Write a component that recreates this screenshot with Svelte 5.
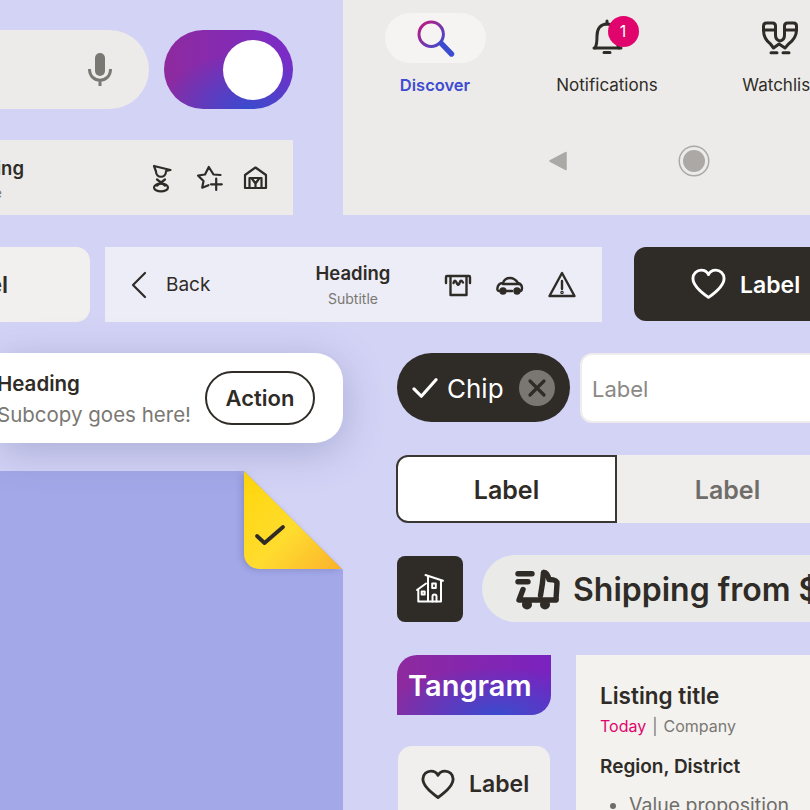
<script>
  const tabs = [
    { label: 'Discover', active: true },
    { label: 'Notifications', badge: 1 },
    { label: 'Watchlist' }
  ];
</script>

{#snippet heart(size)}
  <svg class="heart" width={size} height={size * 0.9} viewBox="0 0 36 32" fill="none" stroke="currentColor" stroke-width="3" stroke-linejoin="round">
    <path d="M18 30C8 23 2 17 2 10.500 2 5.500 6 2 10.500 2 13.500 2 16.500 3.500 18 6.500 19.500 3.500 22.500 2 25.500 2 30 2 34 5.500 34 10.500 34 17 28 23 18 30Z" />
  </svg>
{/snippet}

<div class="canvas">
  <div class="top">
    <div class="top-left">
      <div class="search-row">
        <div class="search">
          <svg width="28" height="38" viewBox="87 50 28 38" fill="none" stroke="#7a7873">
            <rect x="96" y="52" width="10" height="23" rx="5" fill="#7a7873" stroke="none" />
            <path d="M90.500 68c0 15 21 15 21 0M101 78v7" stroke-width="3" />
          </svg>
        </div>
        <div class="toggle"><span class="knob"></span></div>
      </div>

      <div class="strip">
        <div class="strip-title">
          <span class="heading">Heading</span>
          <span class="subtitle">Subtitle</span>
        </div>
        <div class="strip-icons">
          <svg width="34" height="34" viewBox="145 161 34 34" fill="none" stroke="#2f2b26" stroke-width="2.200" stroke-linecap="round" stroke-linejoin="round">
            <path d="M154 166l16.500 4-4.500 1M154 166l2 5.500M156 171.500c0 7 10 7 10 0" />
            <path d="M157 179.500l8 6M165 179.500l-8 6" />
            <ellipse cx="161" cy="187.500" rx="7" ry="3.800" />
          </svg>
          <svg width="34" height="34" viewBox="191.500 161 34 34" fill="none" stroke="#2f2b26" stroke-width="2.200" stroke-linecap="round" stroke-linejoin="round">
            <path d="M220 175l-7-.5-4.700-7.500-3.800 7.500-7 1 5.500 5.500-1.300 6.700 6.300-2.500" />
            <path d="M215.700 178.500v11.500M210.500 184.300h10.800" />
          </svg>
          <svg width="34" height="34" viewBox="238 161 34 34" fill="none" stroke="#2f2b26" stroke-width="2.200" stroke-linejoin="round">
            <path d="M245 188v-13l10.500-7.500 10.500 7.500v13z" />
            <path d="M249.500 188v-10h12v10M251.500 178l4 5.500 4-5.500M255.500 183v5" />
          </svg>
        </div>
      </div>
    </div>

    <div class="nav-panel">
      <div class="tabs">
        {#each tabs as tab, i}
          <div class="tab">
            <div class="tab-icon" class:active={tab.active}>
              {#if i === 0}
                <svg width="40" height="46" viewBox="415.500 15 40 46" fill="none" stroke-linecap="round">
                  <defs>
                    <linearGradient id="lens" x1="0" y1="0" x2="1" y2="1">
                      <stop offset="0" stop-color="#c4187e" />
                      <stop offset="1" stop-color="#3c4ccf" />
                    </linearGradient>
                  </defs>
                  <circle cx="431.700" cy="34.300" r="12.200" stroke="url(#lens)" stroke-width="3" />
                  <path d="M442 43.700l10 10.300" stroke="#3c4ccf" stroke-width="5.400" />
                </svg>
              {:else if i === 1}
                <svg width="40" height="46" viewBox="587 15 40 46" fill="none" stroke="#2f2b26" stroke-width="3" stroke-linecap="round">
                  <path d="M595 48c2-3 2-6 2-12 0-8 4-12 10-12s10 4 10 12c0 6 0 9 2 12" />
                  <path d="M594 48h27M604 52.500h6M607 24v-3" />
                </svg>
              {:else}
                <svg width="40" height="46" viewBox="759 15 40 46" fill="none" stroke="#2f2b26" stroke-width="3" stroke-linecap="round" stroke-linejoin="round">
                  <path d="M763.500 30v-4q0-3 3-3h6q3 0 3 3v4zM784.500 30v-4q0-3 3-3h6q3 0 3 3v4z" />
                  <path d="M763.500 30c0 7 3 11 7 14l3 4 5.500-4 6 4 3.500-4c4-3 8-7 8-14" />
                  <path d="M775.500 30v5c0 3.500 2 5.500 4.500 6 2.500-.5 4.500-2.500 4.500-6v-5" />
                  <path d="M771 52.700h6M783 52.700h6" />
                </svg>
              {/if}
              {#if tab.badge}<span class="badge">{tab.badge}</span>{/if}
            </div>
            <span class="tab-label" class:active={tab.active}>{tab.label}</span>
          </div>
        {/each}
      </div>
      <div class="android-nav">
        <svg width="18" height="20" viewBox="0 0 18 20"><path d="M17 1.500v17L1 10z" fill="#aba8a5" stroke="#aba8a5" stroke-width="1.500" stroke-linejoin="round" /></svg>
        <span class="home"></span>
      </div>
    </div>
  </div>

  <div class="mid">
    <div class="label-stub"><span>Label</span></div>
    <div class="navbar">
      <div class="back">
        <svg width="18" height="28" viewBox="0 0 18 28" fill="none" stroke="#2f2b26" stroke-width="2.200" stroke-linecap="round" stroke-linejoin="round"><path d="M15 2L3 14l12 12" /></svg>
        <span>Back</span>
      </div>
      <div class="title">
        <span class="heading">Heading</span>
        <span class="subtitle">Subtitle</span>
      </div>
      <div class="bar-icons">
        <svg width="34" height="34" viewBox="441 268 34 34" fill="none" stroke="#2f2b26" stroke-width="2.400" stroke-linecap="round" stroke-linejoin="round">
          <path d="M446 283v-6q0-1 1-1h22q1 0 1 1v6M450.500 276v19h16v-19" />
          <path d="M453.500 283c1-3 2-3 3-.5s2 3.500 3 .5 2-3 3.500-.5" />
        </svg>
        <svg width="34" height="34" viewBox="493 268 34 34" fill="none" stroke="#2f2b26" stroke-width="2.400" stroke-linecap="round" stroke-linejoin="round">
          <path d="M499 291c-2 0-2-2-1-5 1-2 3-3 5-3 1-3 3-5 7-5s6 2 8 5c3 1 4 3 4 5 0 2-1 3-2 3M507 291h5" />
          <path d="M503 284h17" />
          <circle cx="503" cy="291" r="2.500" fill="#2f2b26" />
          <circle cx="517" cy="291" r="2.500" fill="#2f2b26" />
        </svg>
        <svg width="34" height="34" viewBox="544 268 34 34" fill="none" stroke="#2f2b26" stroke-width="2.400" stroke-linecap="round" stroke-linejoin="round">
          <path d="M561 273l12.500 23h-25zM561 281v8" />
          <circle cx="561" cy="292.500" r=".6" />
        </svg>
      </div>
    </div>
    <button class="dark-button">
      {@render heart(35)}
      <span>Label</span>
    </button>
  </div>

  <div class="bottom">
    <div class="left-col">
      <div class="toast">
        <div class="copy">
          <span class="toast-heading">Heading</span>
          <span class="toast-sub">Subcopy goes here!</span>
        </div>
        <button class="action">Action</button>
      </div>
      <div class="sheet-wrap">
        <div class="sheet"></div>
        <svg class="fold" width="100" height="100" viewBox="0 0 100 100">
          <defs>
            <linearGradient id="foldfill" x1="0" y1="0" x2="1" y2="1">
              <stop offset="0" stop-color="#ffd60a" />
              <stop offset=".55" stop-color="#ffdc2e" />
              <stop offset="1" stop-color="#fbb12c" />
            </linearGradient>
          </defs>
          <path d="M1 0L99 98H16A15 15 0 0 1 1 83z" fill="url(#foldfill)" />
          <path d="M14 65l7.500 7L40 56" fill="none" stroke="#2f2b26" stroke-width="3.800" stroke-linecap="round" stroke-linejoin="round" />
        </svg>
      </div>
    </div>

    <div class="right-col">
      <div class="row chip-row">
        <div class="chip">
          <svg width="26" height="22" viewBox="0 0 28 24" fill="none" stroke="#fff" stroke-width="3.400" stroke-linecap="round" stroke-linejoin="round"><path d="M2 13l8 8L26 3" /></svg>
          <span class="chip-text">Chip</span>
          <span class="chip-x">
            <svg width="20" height="20" viewBox="0 0 20 20" stroke="#2f2b26" stroke-width="3.200" stroke-linecap="round"><path d="M3 3l14 14M17 3L3 17" /></svg>
          </span>
        </div>
        <div class="input">Label</div>
      </div>

      <div class="row segmented">
        <div class="seg on">Label</div>
        <div class="seg">Label</div>
      </div>

      <div class="row shipping-row">
        <div class="square">
          <svg width="30" height="32" viewBox="415 573 30 32" fill="none" stroke="#fff" stroke-width="2" stroke-linecap="round" stroke-linejoin="round">
            <path d="M417 590l9-6.500M418.300 589v12.500h22.700V581M425.500 575l17.500 5.700M428 576v25.500" />
            <rect x="421.700" y="591.500" width="3" height="3" />
            <rect x="432.200" y="583.500" width="3.600" height="4.600" />
            <path d="M432.500 601.500v-5q0-2 2-2t2 2v5" />
          </svg>
        </div>
        <div class="shipping">
          <svg width="48" height="42" viewBox="514 567 48 42" fill="none" stroke="#2f2b26" stroke-width="5.400" stroke-linecap="round" stroke-linejoin="round">
            <path d="M518 572.700h14M518 580.700h10M523 588.500l-4 10.500h37" />
            <path d="M543.500 571.500c-.5 8-1.500 15-3 23M544 571.500c3 0 4 3 5 7 4 0 8 1 8 4l-1 16" />
            <circle cx="527" cy="603.500" r="5" fill="#2f2b26" stroke="none" />
            <circle cx="545" cy="603.500" r="5" fill="#2f2b26" stroke="none" />
          </svg>
          <span class="shipping-text">Shipping from $</span>
        </div>
      </div>

      <div class="row last-row">
        <div class="stack">
          <div class="tangram">Tangram</div>
          <div class="label-card">
            {@render heart(34)}
            <span>Label</span>
          </div>
        </div>
        <div class="listing">
          <div class="listing-title">Listing title</div>
          <div class="listing-meta"><span class="today">Today</span><span class="sep">|</span><span>Company</span></div>
          <div class="listing-region">Region, District</div>
          <ul>
            <li>Value proposition</li>
          </ul>
        </div>
      </div>
    </div>
  </div>
</div>

<style>
  :global(body) {
    margin: 0;
    background: #d2d3f5;
  }

  .canvas {
    width: 810px;
    height: 810px;
    overflow: hidden;
    background: #d2d3f5;
    color: #2f2b26;
    font-family: Inter, "Noto Sans", sans-serif;
    display: flex;
    flex-direction: column;
  }

  svg {
    display: block;
    flex: none;
  }

  /* top row */
  .top {
    display: flex;
    height: 215px;
    flex: none;
  }

  .top-left {
    width: 293px;
    flex: none;
    padding-top: 30px;
    box-sizing: border-box;
    display: flex;
    flex-direction: column;
    gap: 31px;
  }

  .search-row {
    display: flex;
    gap: 15px;
    height: 79px;
  }

  .search {
    width: 149px;
    background: #ecebea;
    border-radius: 0 40px 40px 0;
    display: flex;
    align-items: center;
    justify-content: flex-end;
    padding-right: 35px;
    box-sizing: border-box;
  }

  .toggle {
    width: 129px;
    border-radius: 40px;
    background:
      radial-gradient(ellipse 70% 72% at 66% 100%, #3a4bce 0%, rgba(58, 75, 206, 0) 100%),
      linear-gradient(90deg, #8e2a9e, #7a2cc8);
    display: flex;
    align-items: center;
    justify-content: flex-end;
    padding-right: 10px;
    box-sizing: border-box;
  }

  .knob {
    width: 60px;
    height: 60px;
    border-radius: 50%;
    background: #fff;
  }

  .strip {
    height: 75px;
    background: #ecebea;
    display: flex;
    align-items: center;
    padding-right: 21px;
  }

  .strip-title {
    width: 24px;
    display: flex;
    flex-direction: column;
    align-items: flex-end;
    white-space: nowrap;
    gap: 3px;
    margin-top: 3px;
  }

  .strip-title .subtitle {
    margin-right: 22px;
  }

  .strip-icons {
    margin-left: auto;
    display: flex;
    gap: 12.5px;
  }

  .heading {
    font-size: 18.5px;
    line-height: 24px;
    font-weight: 600;
  }

  .subtitle {
    font-size: 14px;
    line-height: 20px;
    color: #7a7873;
  }

  .nav-panel {
    margin-left: 50px;
    flex: 1;
    min-width: 0;
    background: #ecebea;
    padding: 13px 0 0 6px;
    display: flex;
    flex-direction: column;
  }

  .tabs {
    display: flex;
  }

  .tab {
    width: 172px;
    flex: none;
    display: flex;
    flex-direction: column;
    align-items: center;
  }

  .tab-icon {
    position: relative;
    width: 101px;
    height: 50px;
    border-radius: 25px;
    display: flex;
    align-items: center;
    justify-content: center;
  }

  .tab-icon.active {
    background: #f5f4f2;
  }

  .badge {
    position: absolute;
    left: 51px;
    top: 3px;
    width: 31px;
    height: 31px;
    border-radius: 50%;
    background: #e0046c;
    color: #fff;
    font-size: 16px;
    line-height: 31px;
    text-align: center;
  }

  .tab-label {
    margin-top: 10px;
    font-size: 17px;
    line-height: 24px;
    white-space: nowrap;
  }

  .tab-label.active {
    color: #3f4bd0;
    font-size: 16.5px;
    font-weight: 600;
  }

  .android-nav {
    margin: 53px 0 0 200px;
    display: flex;
    align-items: center;
    gap: 111px;
  }

  .home {
    width: 22px;
    height: 22px;
    border-radius: 50%;
    background: #aba8a5;
    box-shadow: 0 0 0 3px #ecebea, 0 0 0 4.5px #aba8a5;
    margin-left: 5px;
  }

  /* middle row */
  .mid {
    margin-top: 32px;
    display: flex;
    flex: none;
    height: 75px;
  }

  .label-stub {
    width: 90px;
    flex: none;
    background: #f1f0ee;
    border-radius: 0 14px 14px 0;
    display: flex;
    align-items: center;
    justify-content: flex-end;
    padding-right: 82px;
    box-sizing: border-box;
    font-size: 23px;
    font-weight: 600;
  }

  .navbar {
    margin-left: 15px;
    width: 497px;
    flex: none;
    background: #ecedf7;
    display: grid;
    grid-template-columns: 180px 136px 181px;
    align-items: center;
  }

  .back {
    display: flex;
    align-items: center;
    gap: 18px;
    padding-left: 25px;
    font-size: 19px;
  }

  .title {
    display: flex;
    flex-direction: column;
    align-items: center;
    gap: 4px;
  }

  .bar-icons {
    display: flex;
    gap: 18px;
    padding-left: 20px;
  }

  .dark-button {
    margin-left: 32px;
    width: 260px;
    height: 74px;
    flex: none;
    border: 0;
    border-radius: 12px;
    background: #2f2b26;
    color: #fff;
    font: 600 23px Inter, sans-serif;
    display: flex;
    align-items: center;
    gap: 14px;
    padding: 0 0 0 57px;
  }

  .dark-button span {
    padding-top: 2px;
  }

  /* lower columns */
  .bottom {
    margin-top: 31px;
    display: flex;
    flex: 1;
    min-height: 0;
  }

  .left-col {
    width: 343px;
    flex: none;
    display: flex;
    flex-direction: column;
  }

  .toast {
    height: 90px;
    flex: none;
    background: #fff;
    border-radius: 0 28px 28px 0;
    box-shadow: 0 8px 40px rgba(70, 70, 130, 0.28);
    display: flex;
    align-items: center;
    justify-content: flex-end;
    gap: 14px;
    padding-right: 28px;
    box-sizing: border-box;
    position: relative;
    z-index: 1;
  }

  .copy {
    width: 195px;
    display: flex;
    flex-direction: column;
    white-space: nowrap;
    padding-top: 3px;
  }

  .toast-heading {
    font-size: 20.5px;
    line-height: 30px;
    font-weight: 600;
  }

  .toast-sub {
    margin-top: 1px;
    font-size: 20.5px;
    line-height: 30px;
    color: #7a7873;
  }

  .action {
    width: 110px;
    height: 54px;
    flex: none;
    background: #fff;
    border: 2px solid #2f2b26;
    border-radius: 27px;
    color: #2f2b26;
    font: 600 22px Inter, sans-serif;
  }

  .sheet-wrap {
    margin-top: 28px;
    flex: 1;
    position: relative;
  }

  .sheet {
    height: 100%;
    background: #a2a8e8;
    clip-path: polygon(0 0, 244px 0, 343px 99px, 100% 100%, 0 100%);
  }

  .fold {
    position: absolute;
    left: 243px;
    top: 0;
    filter: drop-shadow(-2px 1px 3px rgba(60, 60, 120, 0.25));
  }

  .right-col {
    margin-left: 54px;
    width: 413px;
    flex: none;
  }

  .row {
    display: flex;
  }

  .chip-row {
    gap: 10px;
  }

  .chip {
    width: 173px;
    height: 69px;
    flex: none;
    box-sizing: border-box;
    border-radius: 35px;
    background: #2f2b26;
    color: #fff;
    display: flex;
    align-items: center;
    padding-left: 15px;
    gap: 9px;
    font-size: 26px;
  }

  .chip-text {
    padding-top: 2px;
  }

  .chip-x {
    width: 36px;
    height: 36px;
    margin-left: auto;
    margin-right: 15px;
    border-radius: 50%;
    background: #7a7772;
    display: flex;
    align-items: center;
    justify-content: center;
  }

  .input {
    width: 300px;
    height: 70px;
    flex: none;
    box-sizing: border-box;
    background: #fff;
    border: 2px solid #eeedeb;
    border-radius: 12px;
    padding-left: 10px;
    font-size: 22px;
    line-height: 68px;
    color: #8a8885;
  }

  .segmented {
    margin: 32px 0 0 -1px;
  }

  .seg {
    width: 221px;
    height: 68px;
    flex: none;
    box-sizing: border-box;
    background: #efeeec;
    color: #6f6d6a;
    font-size: 25px;
    font-weight: 600;
    padding-top: 2px;
    display: flex;
    align-items: center;
    justify-content: center;
  }

  .seg.on {
    background: #fff;
    color: #2f2b26;
    border: 2px solid #3a3733;
    border-radius: 12px 0 0 12px;
  }

  .shipping-row {
    margin-top: 32px;
    gap: 19px;
    align-items: center;
  }

  .square {
    width: 66px;
    height: 66px;
    flex: none;
    border-radius: 8px;
    background: #2f2b26;
    display: flex;
    align-items: center;
    justify-content: center;
  }

  .shipping {
    width: 420px;
    height: 67px;
    flex: none;
    box-sizing: border-box;
    border-radius: 34px 0 0 34px;
    background: #eaeae9;
    padding-left: 32px;
    display: flex;
    align-items: center;
    gap: 11px;
    font-size: 32px;
    font-weight: 600;
    white-space: nowrap;
  }

  .shipping-text {
    padding-top: 2px;
  }

  .last-row {
    margin-top: 33px;
  }

  .stack {
    width: 179px;
    flex: none;
  }

  .tangram {
    width: 154px;
    height: 60px;
    box-sizing: border-box;
    border-radius: 20px 0 20px 0;
    background:
      radial-gradient(ellipse 75% 80% at 65% 100%, #3a4bce 0%, rgba(58, 75, 206, 0) 100%),
      linear-gradient(90deg, #8e2a9e, #7a22c0);
    color: #fff;
    font-size: 29px;
    font-weight: 600;
    line-height: 62px;
    padding-left: 11px;
  }

  .label-card {
    margin: 31px 0 0 1px;
    width: 152px;
    height: 110px;
    box-sizing: border-box;
    border-radius: 14px;
    background: #f0efed;
    display: flex;
    align-items: flex-start;
    gap: 14px;
    padding: 23px 0 0 23px;
    font-size: 23px;
    font-weight: 600;
    line-height: 30px;
  }

  .listing {
    width: 300px;
    flex: none;
    height: 200px;
    box-sizing: border-box;
    background: #f3f2ef;
    padding: 27px 0 0 24px;
  }

  .listing-title {
    font-size: 22.5px;
    line-height: 28px;
    font-weight: 600;
  }

  .listing-meta {
    margin-top: 5px;
    font-size: 16px;
    line-height: 22px;
    color: #7a7873;
    display: flex;
    gap: 6px;
  }

  .today {
    color: #e0046c;
  }

  .listing-region {
    margin-top: 17px;
    font-size: 19px;
    line-height: 26px;
    font-weight: 600;
  }

  ul {
    margin: 12px 0 0;
    padding-left: 29px;
    font-size: 19.5px;
    line-height: 26px;
    color: #6f6d6a;
  }
</style>
